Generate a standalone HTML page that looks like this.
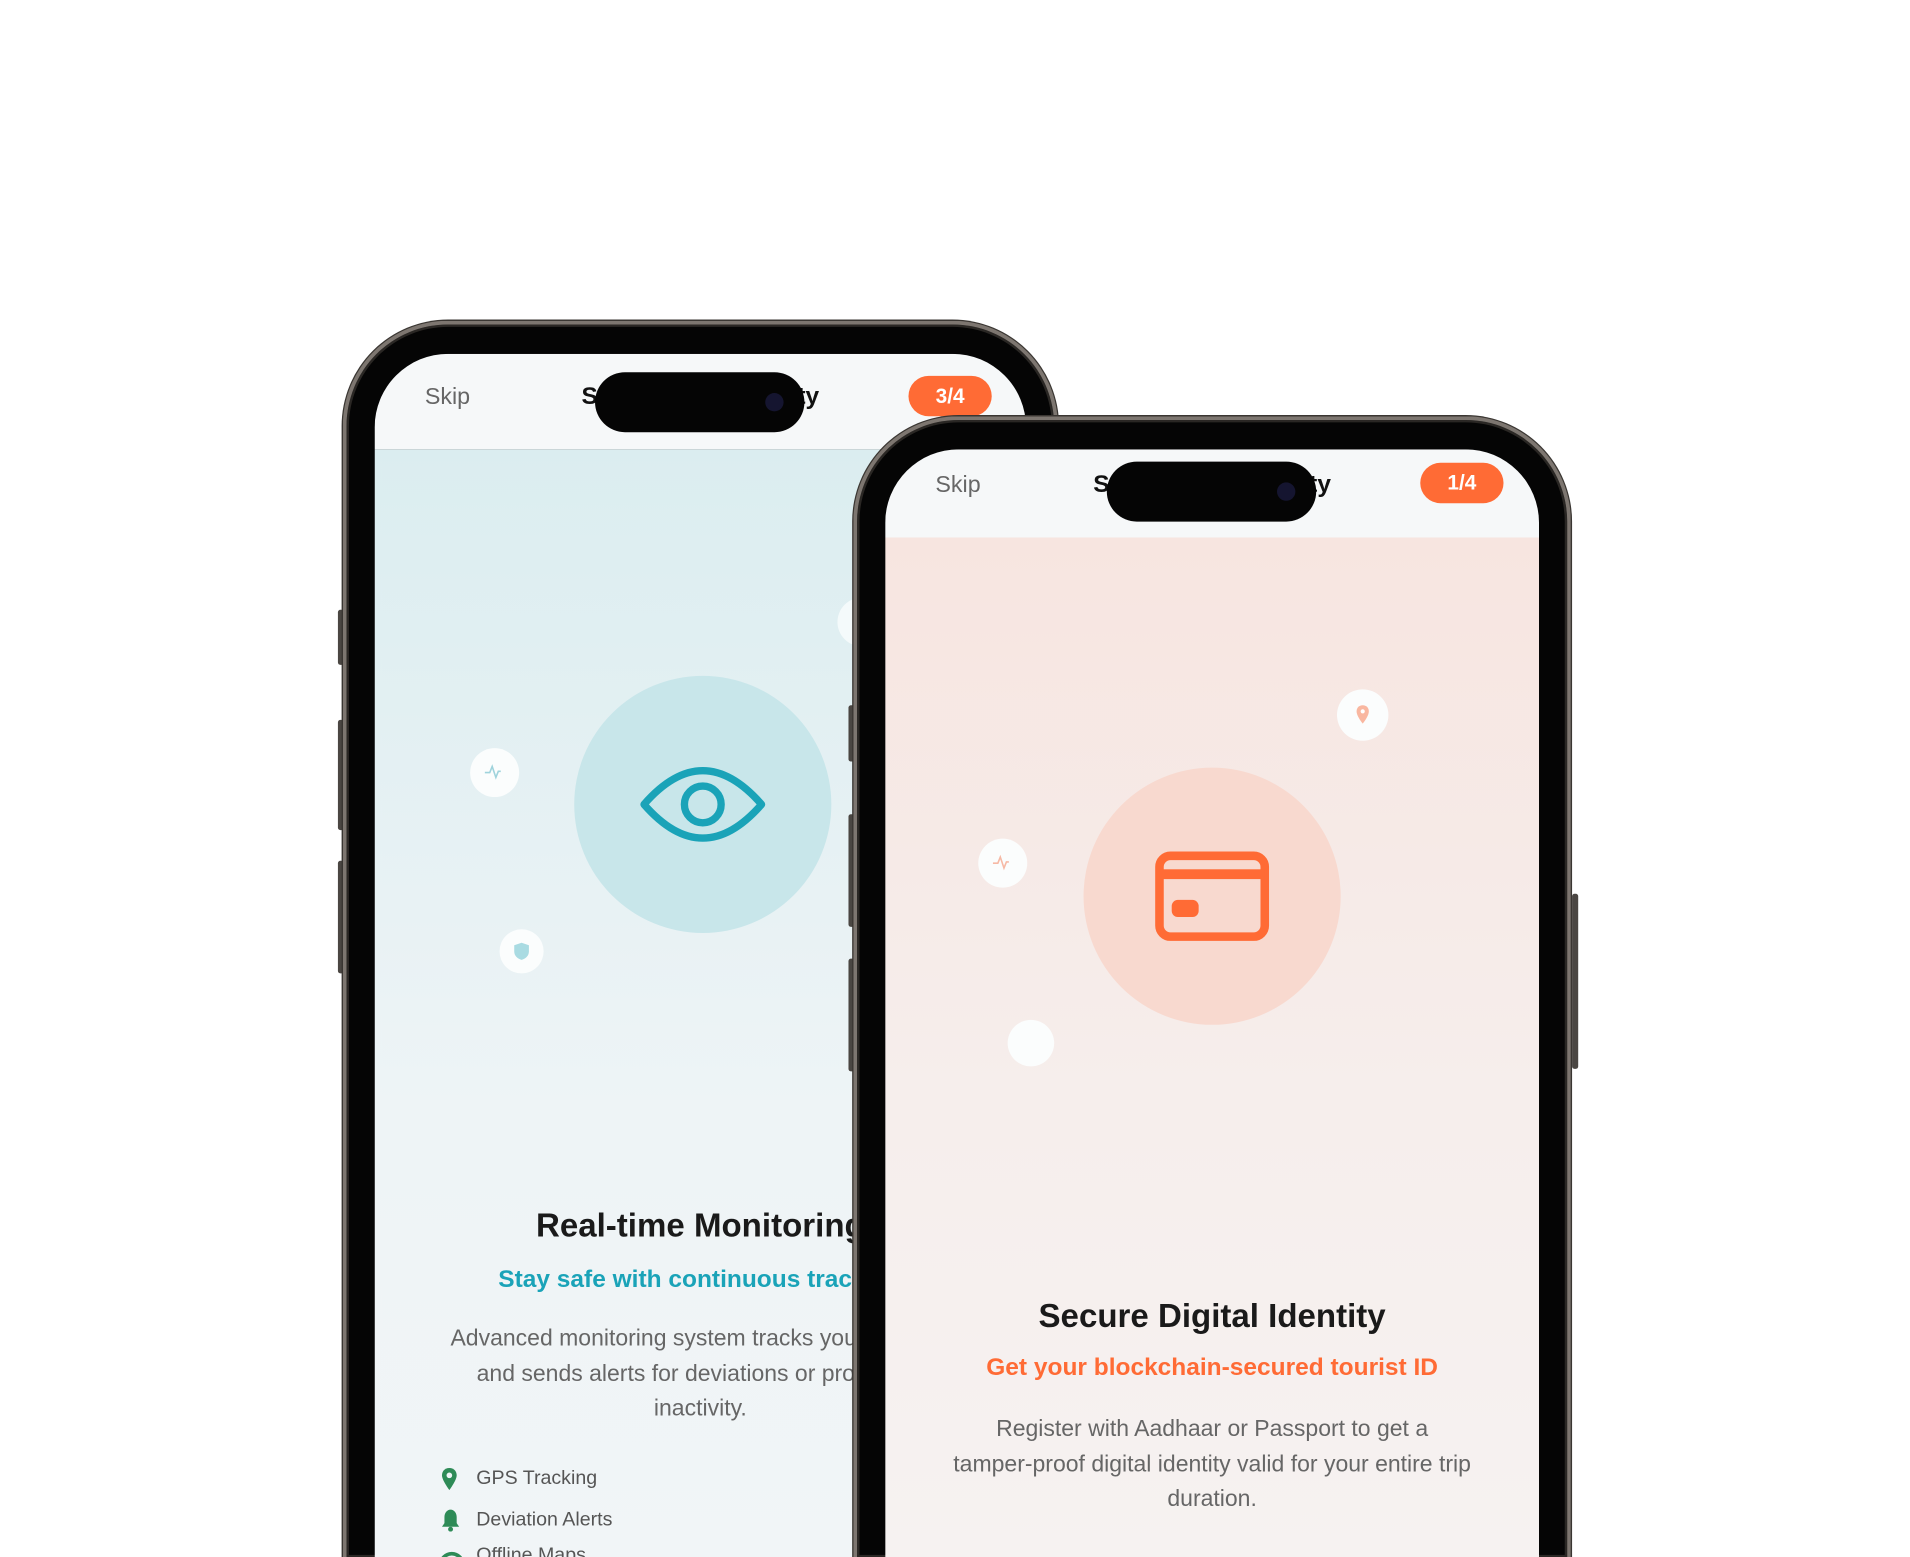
<!DOCTYPE html>
<html><head><meta charset="utf-8"><style>
html,body{margin:0;padding:0;background:#fff;overflow:hidden;width:1910px;height:1557px}
#clip{position:absolute;left:0;top:0;width:1910px;height:1557px;overflow:hidden}
#w{position:absolute;left:0;top:0;width:1560px;height:1272px;overflow:hidden;transform:scale(1.22436);transform-origin:0 0;font-family:"Liberation Sans",sans-serif}
.ph{position:absolute;box-sizing:border-box;border-radius:86px 86px 0 0;background:#050505;border:3px solid #7d7670;border-bottom:0;box-shadow:0 0 0 1px #3a3632, inset 0 0 0 2px #2a2724}
.btn{position:absolute;width:5px;background:#4a4642;border-radius:2px}
.scr{position:absolute;left:23px;top:24px;right:23px;bottom:0;border-radius:60px 60px 0 0;overflow:hidden}
.hdr{position:absolute;left:0;top:0;right:0;height:78px;background:#f6f8f9}
.skip{position:absolute;left:41px;top:25px;font-size:19px;color:#666}
.ttl{position:absolute;left:0;right:0;top:24px;text-align:center;font-size:20px;font-weight:bold;color:#111}
.isl{position:absolute;top:15px;width:171px;height:49px;border-radius:25px;background:#050505;left:50%;margin-left:-86px}
.cam{position:absolute;right:17px;top:17px;width:15px;height:15px;border-radius:50%;background:#151530}
.badge{position:absolute;top:18px;width:68px;height:33px;border-radius:17px;background:#ff6b35;color:#fff;font-weight:bold;font-size:17px;text-align:center;line-height:33px}
.body{position:absolute;left:0;right:0;top:78px;bottom:0}
.big{position:absolute;width:210px;height:210px;border-radius:50%}
.sm{position:absolute;border-radius:50%;background:#fbfdfd}
.h1{position:absolute;left:0;right:0;text-align:center;font-size:27px;font-weight:bold;color:#1a1a1a}
.h2{position:absolute;left:0;right:0;text-align:center;font-size:20px;font-weight:bold;white-space:nowrap}
.p{position:absolute;left:-50px;right:-50px;text-align:center;font-size:18.8px;line-height:28.5px;color:#666;white-space:nowrap}
.f{position:absolute;left:83px;font-size:16px;color:#555;white-space:nowrap}
#p2 .hdr{height:72px}
#p2 .body{top:72px}
#p2 .skip{top:19px}
#p2 .ttl{top:18px}
#p2 .isl{top:10px}
#p2 .badge{top:11px}
</style></head><body><div id="clip"><div id="w">

<!-- phone 1 -->
<div class="btn" style="left:276px;top:498px;height:45px"></div>
<div class="btn" style="left:276px;top:588px;height:90px"></div>
<div class="btn" style="left:276px;top:703px;height:92px"></div>
<div class="ph" style="left:280px;top:262px;width:584px;height:1010px">
 <div class="scr">
  <div class="hdr"></div>
  <div class="skip">Skip</div>
  <div class="ttl">Smart Tourist Safety</div>
  <div class="isl"><div class="cam"></div></div>
  <div class="badge" style="left:436px">3/4</div>
  <div class="body" style="background:linear-gradient(#dbedf0,#eef4f6 60%,#f1f5f7)">
   <div class="sm" style="left:378px;top:121px;width:40px;height:40px;background:#f4fafb"></div>
   <div class="big" style="left:163px;top:185px;background:#c8e6ea">
    <svg width="210" height="210" viewBox="0 0 210 210"><path d="M57 105 Q105 50 153 105 Q105 160 57 105Z" fill="none" stroke="#1aa3b8" stroke-width="6" stroke-linejoin="round"/><circle cx="105" cy="105" r="15" fill="none" stroke="#1aa3b8" stroke-width="6"/></svg>
   </div>
   <div class="sm" style="left:78px;top:244px;width:40px;height:40px"><svg width="40" height="40"><path d="M12 20h4l2-5 3 9 2-5h2" fill="none" stroke="#9fd3dc" stroke-width="1.3"/></svg></div>
   <div class="sm" style="left:102px;top:392px;width:36px;height:36px"><svg width="36" height="36"><path d="M18 11l6 2v5c0 4-3 6-6 7-3-1-6-3-6-7v-5z" fill="#a9dbe2"/></svg></div>
   <div class="h1" style="top:619px">Real-time Monitoring</div>
   <div class="h2" style="top:667px;color:#1aa3b8">Stay safe with continuous tracking</div>
   <div class="p" style="top:712px">Advanced monitoring system tracks your location<br>and sends alerts for deviations or prolonged<br>inactivity.</div>
   <svg style="position:absolute;left:53px;top:831px" width="16" height="20"><path d="M8 1C4 1 2 4 2 7c0 4 6 12 6 12s6-8 6-12c0-3-2-6-6-6z" fill="#2e8b57"/><circle cx="8" cy="7" r="2.3" fill="#eef4f6"/></svg>
   <div class="f" style="top:832px">GPS Tracking</div>
   <svg style="position:absolute;left:53px;top:864px" width="18" height="20"><path d="M9 2c-3 0-5 3-5 6v5l-2 3h14l-2-3V8c0-3-2-6-5-6z" fill="#2e8b57"/><circle cx="9" cy="18" r="2" fill="#2e8b57"/></svg>
   <div class="f" style="top:866px">Deviation Alerts</div>
   <svg style="position:absolute;left:52px;top:899px" width="22" height="14"><path d="M2 12a9 9 0 0 1 18 0" fill="none" stroke="#2e8b57" stroke-width="3"/></svg>
   <div class="f" style="top:895px">Offline Maps</div>
  </div>
 </div>
</div>

<!-- phone 2 -->
<div class="btn" style="left:693px;top:576px;height:46px"></div>
<div class="btn" style="left:693px;top:665px;height:92px"></div>
<div class="btn" style="left:693px;top:783px;height:92px"></div>
<div class="btn" style="left:1284px;top:730px;height:143px"></div>
<div class="ph" id="p2" style="left:697px;top:340px;width:586px;height:932px">
 <div class="scr">
  <div class="hdr"></div>
  <div class="skip">Skip</div>
  <div class="ttl">Smart Tourist Safety</div>
  <div class="isl"><div class="cam"></div></div>
  <div class="badge" style="left:437px">1/4</div>
  <div class="body" style="background:linear-gradient(#f7e5e0,#f6eeec 55%,#f6f2f1)">
   <div class="big" style="left:162px;top:188px;background:#f8d9cf">
    <svg width="210" height="210" viewBox="0 0 210 210"><rect x="62" y="72" width="86" height="66" rx="9" fill="none" stroke="#ff6b35" stroke-width="7"/><rect x="62" y="83" width="86" height="8" fill="#ff6b35"/><rect x="72" y="108" width="22" height="14" rx="5" fill="#ff6b35"/></svg>
   </div>
   <div class="sm" style="left:369px;top:124px;width:42px;height:42px"><svg width="42" height="42"><path d="M21 13c-3 0-5 2-5 5 0 4 5 10 5 10s5-6 5-10c0-3-2-5-5-5z" fill="#f9b7a0"/><circle cx="21" cy="18" r="1.7" fill="#fff"/></svg></div>
   <div class="sm" style="left:76px;top:246px;width:40px;height:40px"><svg width="40" height="40"><path d="M12 20h4l2-5 3 9 2-5h2" fill="none" stroke="#f6b9a5" stroke-width="1.3"/></svg></div>
   <div class="sm" style="left:100px;top:394px;width:38px;height:38px"></div>
   <div class="h1" style="top:621px">Secure Digital Identity</div>
   <div class="h2" style="top:667px;color:#ff6b35">Get your blockchain-secured tourist ID</div>
   <div class="p" style="top:714px">Register with Aadhaar or Passport to get a<br>tamper-proof digital identity valid for your entire trip<br>duration.</div>
  </div>
 </div>
</div>
</div></div></body></html>
